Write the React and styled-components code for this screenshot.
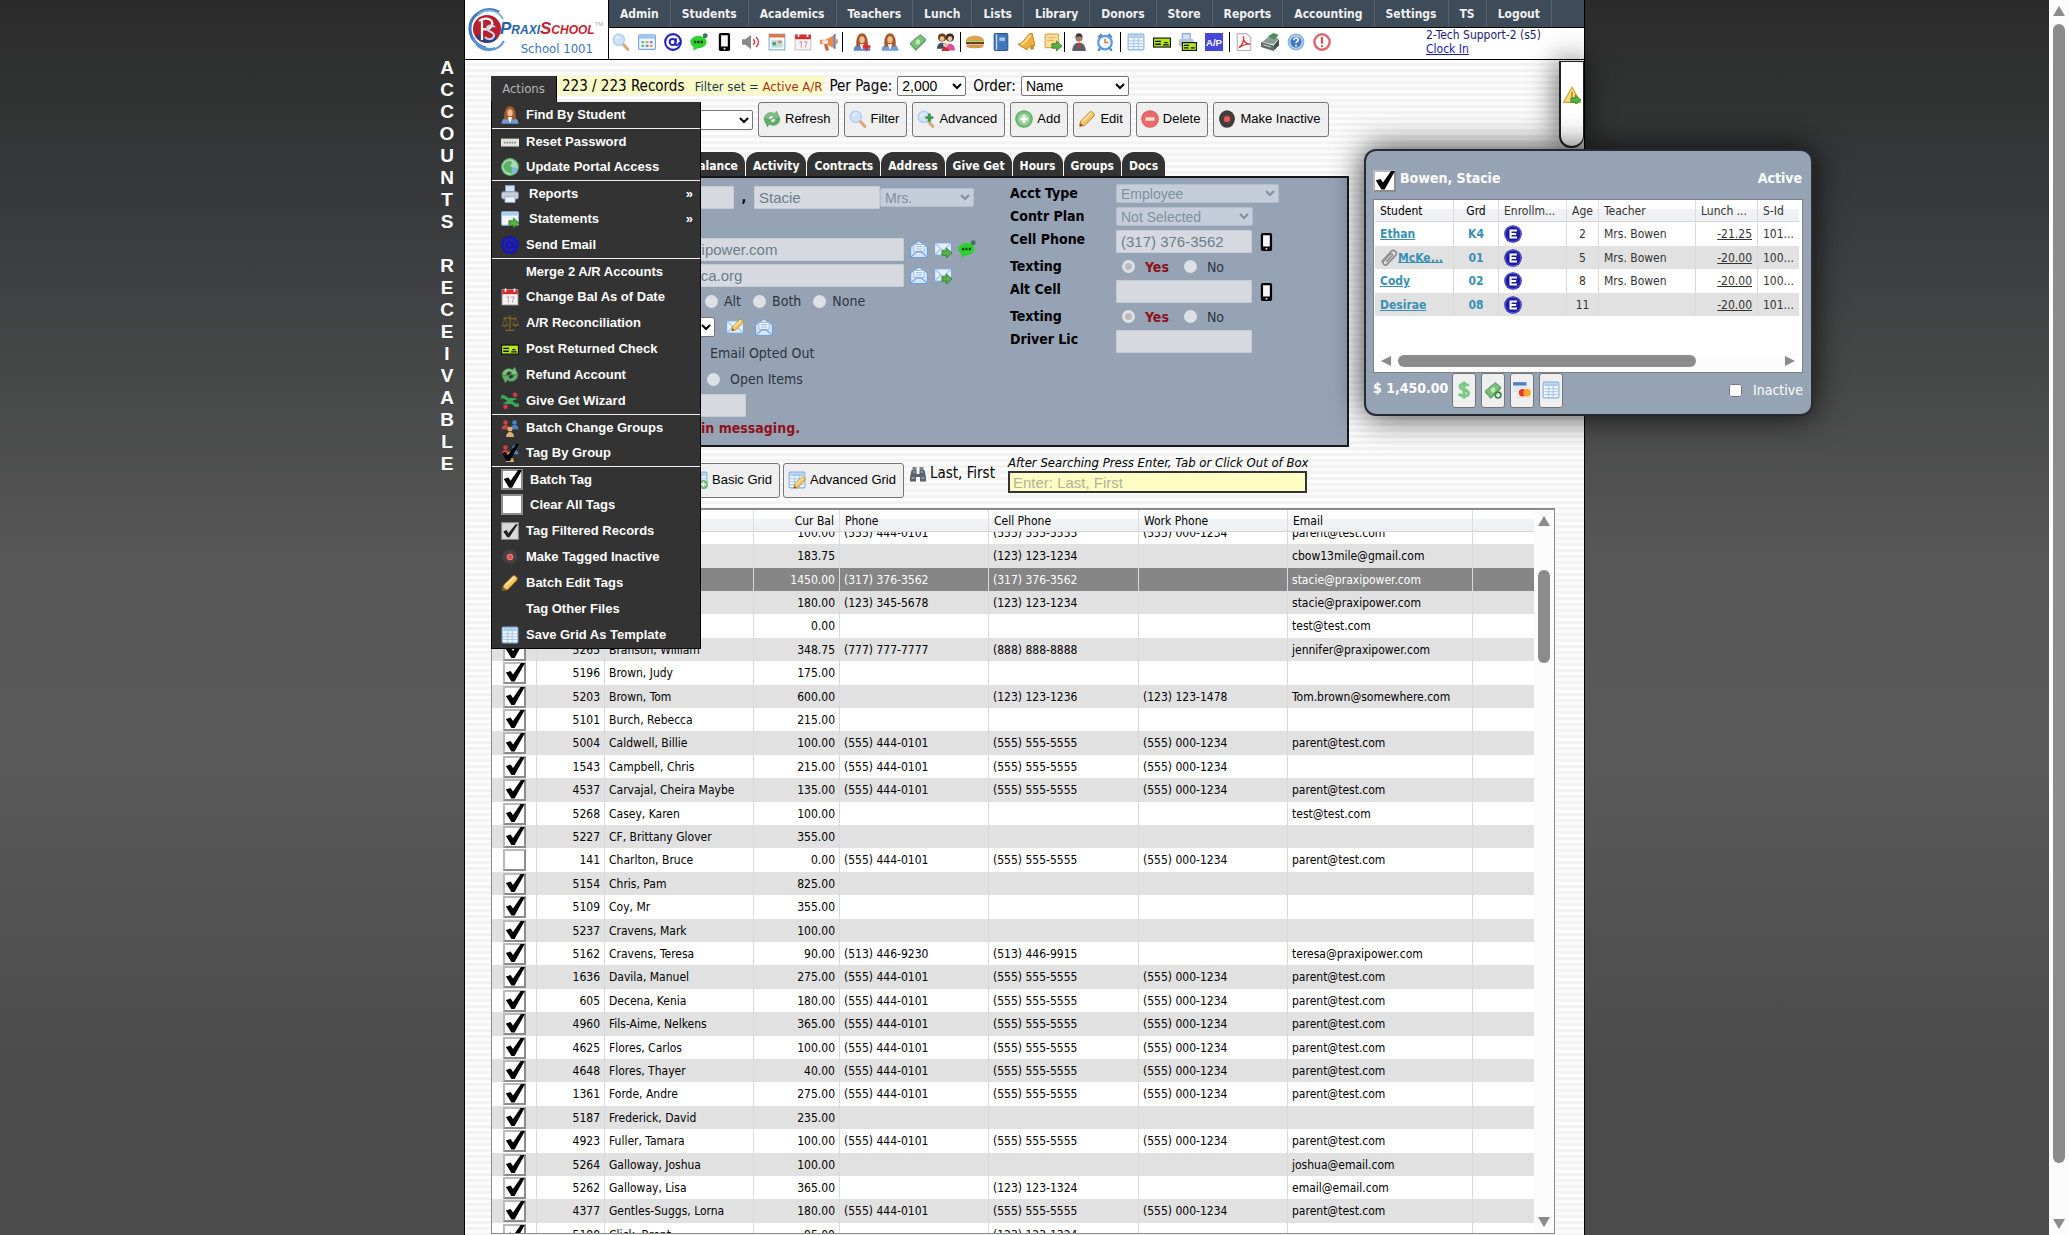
import React, { useLayoutEffect, useRef, useState } from 'react';
import styled, { createGlobalStyle } from 'styled-components';

const ui = "'DejaVu Sans Condensed', 'Noto Sans', sans-serif";
const arial = "'Liberation Sans', Arial, sans-serif";

const GlobalStyle = createGlobalStyle`
  * { box-sizing: border-box; }
  body {
    margin: 0;
    font-family: ${ui};
    font-size: 13px;
    color: #000;
    background: #2b2b2b linear-gradient(#2b2b2b 0, #38393a 200px, #575757 560px, #595959 760px, #4b4b4b 1080px);
  }
  button, input, select { font-family: ${arial}; margin: 0; }
`;

const Layout = styled.div`
  display: grid;
  grid-template-columns: 1fr minmax(0, 1121px) 1fr 20px;
  height: 100vh;
  overflow: hidden;
`;

const SideTitle = styled.h1`
  justify-self: end;
  width: 20px;
  margin: 57px 7px 0 0;
  font: bold 19px/22px ${arial};
  text-align: center;
  color: #fff;
  span { display: block; height: 22px; }
`;

const Page = styled.div`
  position: relative;
  display: flex;
  flex-direction: column;
  min-height: 0;
  border: 1px solid #000;
  border-width: 0 1px;
  background: repeating-linear-gradient(#fcfcfc 0 3px, #f3f3f3 3px 6px);
`;

const Header = styled.header`
  display: flex;
  height: 60px;
  background: #fff;
  border-bottom: 1px solid #000;
`;

const Logo = styled.a`
  display: flex;
  align-items: center;
  width: 144px;
  padding-left: 3px;
  border-right: 1px solid #000;
  text-decoration: none;
`;

const LogoText = styled.div`
  flex: 1;
  min-width: 0;
  padding: 17px 15px 0 0;
  text-align: right;
  font-size: 13px;
  line-height: 19px;
  color: #3a74b8;
`;

const Brand = styled.div`
  display: flex;
  margin: 0 -14px 0 -6px;
  font: italic bold 17px/20px ${arial};
  font-variant: small-caps;
  white-space: nowrap;
  color: #2a62a8;
  em { color: #c4222e; }
  sup { font: 6px/10px ${arial}; color: #a5a5a5; }
`;

const HeaderMain = styled.div`
  flex: 1;
  min-width: 0;
`;

const Nav = styled.nav`
  display: flex;
  height: 28px;
  background: #3e4b59;
  border-bottom: 1px solid #000;
`;

const NavLink = styled.a`
  padding: 0 11px;
  border-right: 1px solid #56626f;
  font-size: 12px;
  font-weight: bold;
  line-height: 28px;
  color: #f0f0f0;
  text-decoration: none;
`;

const IconBar = styled.div`
  display: flex;
  align-items: center;
  height: 31px;
  padding-bottom: 3px;
`;

const IconGroup = styled.div`
  display: flex;
  align-items: center;
  gap: ${p => p.$gap || 8}px;
  height: 20px;
  padding: 0 ${p => p.$right || 5}px 0 ${p => p.$left || 5}px;
  border-right: ${p => (p.$last ? 'none' : '1px solid #000')};
`;

const IconButton = styled.button`
  display: flex;
  padding: 0;
  border: none;
  background: none;
`;

const UserBox = styled.div`
  width: 158px;
  margin-left: auto;
  font-size: 12px;
  line-height: 14px;
  color: #1b1b70;
  a { display: block; color: #2020b0; }
`;

const Content = styled.main`
  flex: 1;
  min-height: 0;
  display: flex;
  flex-direction: column;
  padding: 16px 29px 1px 26px;
`;

const TopRow = styled.div`
  display: flex;
  height: 26px;
  line-height: 20px;
  font-size: 15px;
`;

const ActionsWrap = styled.div`
  position: relative;
  z-index: 5;
  width: 66px;
`;

const ActionsButton = styled.button`
  && { font-family: ${ui}; }
  width: 66px;
  height: 26px;
  padding: 0 0 2px;
  border: 1px solid #000;
  border-width: 0 1px 0 0;
  background: #333;
  color: #b5b5b5;
  font-size: 13px;
`;

const Menu = styled.ul`
  position: absolute;
  top: 26px;
  left: 0;
  width: 210px;
  margin: 0;
  padding: 0;
  list-style: none;
  background: #333;
  border: 1px solid #000;
  border-top: none;
`;

const MenuItem = styled.li`
  border-top: ${p => (p.$line ? '1px solid #eee' : 'none')};
  height: 26px;
  button {
    && { font-family: ${ui}; }
    display: flex;
    align-items: center;
    gap: ${p => (p.$wide ? 10 : 7)}px;
    width: 100%;
    height: 25px;
    padding: 0 7px 0 9px;
    border: none;
    background: none;
    color: #fff;
    font-size: 13px;
    font-weight: bold;
    white-space: nowrap;
  }
  b { margin-left: auto; }
`;

const Blank = styled.span`
  width: 18px;
`;

const Records = styled.div`
  height: 19px;
  padding: 0 3px 0 5px;
  background: #fafac8;
  small { font-size: 13px; color: #24384a; margin-left: 6px; }
  em { font-style: normal; color: #a8320f; }
`;

const Inline = styled.label`
  display: flex;
  gap: 5px;
  margin-left: ${p => p.$left || 4}px;
`;

const Select = styled.select`
  width: ${p => p.$w}px;
  height: 20px;
  padding: 0;
  border: 1px solid #767676;
  border-radius: 2px;
  background: #fff;
  color: #000;
  font-size: 14px;
  &:disabled {
    height: 19px;
    opacity: 1;
    border: 1px solid #b4bfcc;
    background: #c4cdd9;
    color: #7f909f;
  }
`;

const ButtonRow = styled.div`
  display: flex;
  align-items: center;
  gap: 5px;
  height: 35px;
`;

const Button = styled.button`
  display: flex;
  align-items: center;
  gap: 4px;
  height: 35px;
  padding: 0 7px 2px 4px;
  border: 1px solid #767676;
  border-radius: 3px;
  background: #efefef;
  color: #000;
  font-size: 13px;
  white-space: nowrap;
`;

const Tabs = styled.div`
  display: flex;
  gap: 1px;
  height: 24px;
  margin-top: 15px;
  padding-left: 192px;
`;

const Tab = styled.button`
  && { font-family: ${ui}; }
  height: 24px;
  padding: 3px 7px 0;
  border: none;
  border-radius: 12px 12px 0 0;
  background: #333;
  color: #fff;
  font-size: 12px;
  font-weight: bold;
`;

const Panel = styled.form`
  display: flex;
  max-width: 858px;
  height: 271px;
  flex: none;
  padding-top: 6px;
  border: 2px solid #16181c;
  background: #96a3b5;
`;

const LeftForm = styled.div`
  width: 517px;
`;

const Row = styled.div`
  display: flex;
  align-items: center;
  gap: ${p => p.$gap || 0}px;
  height: 26px;
  padding-left: ${p => p.$indent || 120}px;
  font-size: 14px;
  color: #2c3540;
`;

const Warning = styled(Row)`
  height: 20px;
  font-weight: bold;
  color: #8e1219;
`;

const TextBox = styled.input`
  width: ${p => p.$w}px;
  height: 23px;
  padding: 0 4px;
  border: 1px solid #c6ccd5;
  border-radius: 1px;
  background: #d6dae0;
  color: #6b7d8c;
  font-size: 15px;
`;

const Comma = styled.span`
  width: 20px;
  text-align: center;
  font-weight: bold;
  color: #000;
`;

const RadioLabel = styled.label`
  display: flex;
  align-items: center;
  gap: ${p => p.$gap || 6}px;
  font-size: 14px;
  font-weight: ${p => (p.$hot ? 'bold' : 'normal')};
  color: ${p => (p.$hot ? '#8e1219' : '#2c3540')};
`;

const Radio = styled.input.attrs({ type: 'radio' })`
  appearance: none;
  width: 13px;
  height: 13px;
  border: 3px solid #dde0e4;
  border-radius: 50%;
  background: #dde0e4;
  &:checked { background: #bcbcbc; }
`;

const RightForm = styled.div`
  display: grid;
  grid-template-columns: 106px auto;
  row-gap: 4px;
  align-content: start;
  justify-content: start;
`;

const FieldLabel = styled.label`
  font-size: 14px;
  font-weight: bold;
  line-height: 19px;
`;

const Cell = styled.div`
  display: flex;
  align-items: center;
  gap: 6px;
  height: ${p => (p.$short ? 19 : 23)}px;
`;

const RadioCell = styled(Cell)`
  height: 19px;
  padding-left: 6px;
  gap: 15px;
`;

const SearchRow = styled.div`
  display: flex;
  gap: 3px;
  margin: 16px 0 10px 194px;
  height: 35px;
`;

const LastFirst = styled.div`
  display: flex;
  gap: 4px;
  width: 98px;
  padding: 1px 0 0 3px;
  font-size: 15px;
  line-height: 18px;
  svg { margin-top: 2px; }
`;

const Search = styled.label`
  display: block;
  width: 299px;
  margin-top: -8px;
  font-size: 13px;
  line-height: 16px;
  font-style: italic;
  white-space: nowrap;
  input {
    display: block;
    width: 100%;
    height: 22px;
    padding: 0 3px;
    border: 2px solid #333;
    background: #fdfdc4;
    font-size: 15px;
  }
  input::placeholder { color: #b3b39a; }
`;

const GridBox = styled.section`
  flex: 1;
  min-height: 0;
  display: flex;
  border: 2px solid #8a8a8a;
  border-width: 2px 1px 1px;
  background: #fff;
`;

const GridScroll = styled.div`
  flex: 1;
  overflow: auto;
  scrollbar-width: none;
`;

const Table = styled.table`
  width: 100%;
  table-layout: fixed;
  border-collapse: separate;
  border-spacing: 0;
  font-size: 12px;
  th {
    position: sticky;
    top: 0;
    z-index: 1;
    height: 22px;
    padding: 0 5px;
    border-right: 1px solid #dadde0;
    border-bottom: 1px solid #d5d5d5;
    background: linear-gradient(#fff 45%, #f0f2f5 45%, #eef0f3);
    font-weight: normal;
    text-align: left;
  }
  td {
    height: 23px;
    padding: 0 4px;
    border-right: 1px solid #d8dadc;
    line-height: 16px;
    white-space: nowrap;
    overflow: hidden;
  }
  th.num, td.num { text-align: right; }
  th:last-child, td:last-child { border-right: none; }
`;

const DataRow = styled.tr`
  background: ${p => (p.$selected ? '#868686' : '#fff')};
  color: ${p => (p.$selected ? '#fff' : '#000')};
  &:nth-child(even) { background: #e1e1e1; }
  &:nth-child(5n + 2) td, &:nth-child(5n) td { height: 24px; }
`;

const tickShape = 'polygon(4% 50%, 28% 42%, 40% 60%, 80% 0, 100% 0, 48% 98%, 32% 98%)';

const Tick = styled.input.attrs({ type: 'checkbox' })`
  appearance: none;
  display: block;
  flex: none;
  width: 23px;
  height: 22px;
  margin: ${p => (p.$inTable ? '0 0 0 7px' : '0')};
  border: 2px solid #8c8c8c;
  border-top-color: #b9b9b9;
  border-left-color: #b9b9b9;
  background: #fff;
  &:checked::before {
    content: '';
    display: block;
    width: 20px;
    height: 19px;
    margin-top: -1px;
    background: #000;
    clip-path: ${tickShape};
  }
`;

const ScrollCol = styled.div`
  display: flex;
  flex-direction: ${p => (p.$across ? 'row' : 'column')};
  align-items: center;
  gap: ${p => (p.$across ? 6 : 8)}px;
  flex: none;
  width: ${p => (p.$across ? 'auto' : '20px')};
  padding: ${p => (p.$across ? '0 3px 0 5px' : '6px 0')};
  background: #fcfcfc;
`;

const Rail = styled.div`
  flex: 1;
  display: flex;
  flex-direction: ${p => (p.$across ? 'row' : 'column')};
`;

const Gap = styled.div`
  flex: ${p => p.$n} 0 0;
`;

const Thumb = styled.div`
  flex: ${p => p.$n} 0 0;
  min-width: 12px;
  min-height: 12px;
  border-radius: 6px;
  background: #8b8b8b;
`;

const SideTab = styled.button`
  position: absolute;
  top: 61px;
  right: 0;
  width: 25px;
  height: 87px;
  padding: 0 0 16px;
  border: 2px solid #222;
  border-width: 1px 1px 2px 2px;
  border-radius: 0 0 12px 12px;
  background: #fff;
  box-shadow: 0 0 30px rgba(0, 0, 0, 0.7);
`;

const Card = styled.aside`
  position: absolute;
  top: 149px;
  left: 899px;
  z-index: 4;
  width: 449px;
  padding: 0 8px 7px 7px;
  border: 2px solid #262c34;
  border-radius: 12px;
  background: #96a3b5;
  box-shadow: 0 0 32px rgba(0, 0, 0, 0.8);
`;

const CardHead = styled.div`
  display: flex;
  align-items: flex-end;
  gap: 4px;
  height: 48px;
  padding: 0 1px 7px 0;
  color: #fff;
  font-size: 14px;
  font-weight: bold;
  line-height: 28px;
  span:last-child { margin-left: auto; }
`;

const CardGrid = styled.div`
  height: 174px;
  display: flex;
  flex-direction: column;
  justify-content: space-between;
  padding: 0 3px 5px 1px;
  border: 1px solid #7c838c;
  background: #fff;
`;

const CardTable = styled(Table)`
  color: #333;
  td { height: 23px; padding: 0 5px; }
  tr:nth-child(odd) td { height: 24px; }
  tbody tr:nth-child(even) { background: #e1e1e1; }
  th { white-space: nowrap; }
  th:nth-child(-n + 2) { color: #000; }
  th.mid, td.mid { text-align: center; }
  td svg { vertical-align: middle; }
`;

const Student = styled.a`
  font-weight: bold;
  color: #3990b4;
`;

const Grade = styled.b`
  color: #3990b4;
`;

const CardFoot = styled.div`
  display: flex;
  align-items: center;
  gap: 5px;
  height: 34px;
  color: #fff;
  strong { font-size: 14px; line-height: 18px; width: 74px; padding-bottom: 4px; white-space: nowrap; }
  button { width: 24px; padding: 0 2px; justify-content: center; }
  label {
    display: flex;
    align-items: center;
    gap: 11px;
    margin-left: auto;
    font-size: 14px;
  }
  input { width: 13px; height: 13px; }
`;

// every drawing is made on a 16 by 16 board
const person = (hair, top, x = 0) => (
  <g transform={`translate(${x} 0)`}>
    <path d="M.5 15.800c0-4.500 3-5.300 7.500-5.300s7.500.8 7.500 5.300z" fill={top} />
    <path d="M3.200 12c-.8-3.500-.2-11.700 4.800-11.700s5.600 8.200 4.800 11.700z" fill={hair} />
    <ellipse cx="8" cy="6" rx="2.400" ry="3.200" fill="#f0be93" />
    <path d="M6 10h4l-2 5z" fill="#fff" />
  </g>
);
const sheet = (
  <>
    <rect x="1" y="1" width="14" height="14" rx="1" fill="#f2f8ff" stroke="#86aedb" />
    <rect x="2" y="2" width="12" height="2.500" fill="#a9cbee" />
    <path d="M2 7h12M2 9.500h12M2 12h12M6 4v11M10 4v11" stroke="#9dbfe6" strokeWidth=".8" />
  </>
);
const arrow = <path d="M7 9.500h4V7l5 4.500-5 4.500v-2.500H7z" fill="#58b044" stroke="#2f7a22" strokeWidth=".7" />;
const lens = (
  <>
    <path d="M9.500 9.500l4.500 5" stroke="#d8a878" strokeWidth="2.800" strokeLinecap="round" />
    <circle cx="6" cy="6" r="5" fill="#cfe2fa" stroke="#b3cdf0" strokeWidth="1.200" />
    <path d="M3.500 5.500c.5-1.500 1.500-2 3-2" stroke="#fff" fill="none" />
  </>
);
const pencil = (
  <>
    <path d="M1.500 14.500l.7-4.500L10.500 1.800c1.500-1.200 5 1.500 3.700 3.500L6 13.800z" fill="#f6c35c" stroke="#b87b25" strokeWidth=".8" />
    <path d="M4 10l8-7.500" stroke="#fde7a8" strokeWidth="1.600" />
    <path d="M1.500 14.500l.8-2.800 2 2z" fill="#6a4a2a" />
  </>
);
const recycle = (
  <>
    <path d="M1 8c.5-5 5.500-7 9.500-4.500L12 1l3 6.500-7 .3 1.600-1.700C7.500 4 5 5 4.600 8z" fill="#7cc182" stroke="#4b9a58" strokeWidth=".6" />
    <path d="M15 8c-.5 5-5.500 7-9.500 4.500L4 15 1 8.500l7-.3-1.600 1.700C8.500 12 11 11 11.400 8z" fill="#5fae68" stroke="#4b9a58" strokeWidth=".6" />
  </>
);
const check = (
  <>
    <rect x=".5" y="4.500" width="15" height="8" fill="#b5e61d" stroke="#111" />
    <path d="M2 7.500h5M2 10h5M9 10.500h5M10 8.500h3" stroke="#111" strokeWidth="1.200" />
  </>
);
const printer = (
  <>
    <path d="M4 .5h8V7H4z" fill="#cfe3fa" stroke="#8aa8cf" strokeWidth=".7" />
    <rect x=".5" y="6" width="15" height="6.500" rx="1.500" fill="#c8cdd6" stroke="#7c8798" strokeWidth=".8" />
    <path d="M3.500 10.500h9v5h-9z" fill="#eaf3ff" stroke="#8aa8cf" strokeWidth=".7" />
  </>
);
const calendar = (
  <>
    <rect x="1" y="1.500" width="14" height="13.500" fill="#f4f4f4" stroke="#bbb" strokeWidth=".8" />
    <path d="M1 1.500h14v4H1z" fill="#d92b2b" />
    <path d="M4 .5v3M12 .5v3" stroke="#fff" strokeWidth="1.500" />
    <path d="M5 8.500l1.500-1v5.500M8.500 8h3l-1.500 5" stroke="#c89aa5" fill="none" strokeWidth=".9" />
  </>
);
const at = color => (
  <>
    <circle cx="8" cy="8" r="7" fill="none" stroke={color} strokeWidth="1.800" />
    <circle cx="7.700" cy="8" r="2.700" fill="none" stroke={color} strokeWidth="1.700" />
    <path d="M10.800 4.800l-.8 5.200c.5 1.500 3.300 1 4-2" fill="none" stroke={color} strokeWidth="1.600" />
  </>
);
const money = (
  <>
    <path d="M1 9l9-7.500 5 4-9 9z" fill="#7cc07a" stroke="#478f4c" strokeWidth=".8" />
    <ellipse cx="8" cy="8" rx="2" ry="2.400" fill="#bfe5b8" />
    <path d="M1 9v1.500L6 16l9-9V5.500l-9 9z" fill="#5fa763" />
  </>
);
const people = (a, b, c) => (
  <>
    <circle cx="4" cy="3" r="2" fill={a} /><path d="M.5 9c0-5 7-5 7 0z" fill={a} />
    <circle cx="12" cy="3" r="2" fill={b} /><path d="M8.500 9c0-5 7-5 7 0z" fill={b} />
    <circle cx="8" cy="9" r="2.200" fill={c} /><path d="M4.500 16c0-6 7-6 7 0z" fill={c} />
  </>
);
const envelope = <><rect x=".5" y="2.500" width="15" height="11" fill="#e6f1fd" stroke="#79a5d8" /><path d="M1 3l7 6.500L15 3M1 13l5-5M15 13l-5-5" fill="none" stroke="#9dbfe6" /></>;
const phone = <><rect x="2.500" y="0" width="10" height="16" rx="1.500" fill="#000" /><rect x="4.500" y="2" width="6" height="10" fill="#f3f5f8" /><circle cx="7.500" cy="14" r=".9" fill="#ddd" /></>;
const stopDot = <><ellipse cx="8" cy="8" rx="7" ry="7.800" fill="#3d3d3d" /><circle cx="8" cy="8" r="4.500" fill="#5a3a3a" /><rect x="5.500" y="5.500" width="5" height="5" rx="1.500" fill="#ef5a5a" /></>;

const drawings = {
  lens,
  windowGrid: <><rect x=".5" y="1.500" width="15" height="13" rx="1" fill="#eef6ff" stroke="#7fa8dc" /><path d="M1 2h14v3H1z" fill="#9cc3ee" /><path d="M3 7h2.500v2H3zM3 10.500h2.500v2H3z" fill="#6b9" /><path d="M6.800 7h2.500v2H6.800zM10.500 10.500H13v2h-2.500z" fill="#e9a13a" /><path d="M10.500 7H13v2h-2.500zM6.800 10.500h2.500v2H6.800z" fill="#6a8fd8" /></>,
  at: at('#2222c0'),
  atDark: <><circle cx="8" cy="8" r="7.500" fill="#26268c" />{at('#1616c0')}</>,
  chat: <><ellipse cx="7.500" cy="8" rx="7.200" ry="5.500" fill="#2fd131" /><path d="M3 11l0 4.500 5-2.500z" fill="#2fd131" /><circle cx="13.500" cy="2.500" r="2.200" fill="#49705a" /><path d="M3.500 8h8" stroke="#0a3d0a" strokeWidth="2.200" strokeDasharray="2 1" /></>,
  phone,
  speaker: <><path d="M0 5.500h3L8 1.500v13L3 10.500H0z" fill="#8a8a8a" /><path d="M10 5.500c1.500 1.500 1.500 3.500 0 5M12.500 3.500c2.700 2.700 2.700 6.300 0 9" stroke="#e03a44" fill="none" strokeWidth="1.400" /></>,
  planner: <><rect x="1" y="1" width="14" height="14" fill="#f7fbff" stroke="#86aedb" /><path d="M1 1h14v3H1z" fill="#e0744a" /><path d="M3 6h10v7H3z" fill="#bfe0d5" /><path d="M4 8h3v3H4z" fill="#4b9d7b" /><path d="M9 7h3v2H9z" fill="#e07a5f" /></>,
  calendar,
  horn: <><path d="M0 6h5l8-4.500v12L5 10H0z" fill="#e88b4d" /><path d="M3.500 10h3l1.500 5.500H5z" fill="#c06a3c" /><path d="M13 1v13" stroke="#6b89c4" strokeWidth="2" /><path d="M2 6.500h5v3H2z" fill="#f2f2f2" /><path d="M15 5.500v4" stroke="#e88b4d" strokeWidth="1.500" /></>,
  personAdd: <>{person('#a8592b', '#5c86c4')}<path d="M12 8.500v7M8.500 12h7" stroke="#e02b2b" strokeWidth="2.200" /></>,
  person: person('#a8592b', '#6f9bd6'),
  money,
  family: <><circle cx="4.500" cy="4" r="3.600" fill="#6b3b1c" /><circle cx="11.500" cy="4" r="3.600" fill="#33261d" /><path d="M0 14c0-7 9-7 9 0z" fill="#3f4c66" /><path d="M7 15.500c0-8 9-8 9 0z" fill="#e0509a" /><circle cx="4.500" cy="5" r="2.200" fill="#f0be93" /><circle cx="11.500" cy="5" r="2.200" fill="#f0be93" /><circle cx="7.500" cy="10.500" r="2.200" fill="#f0be93" /><path d="M4 16c0-4 7-4 7 0z" fill="#c33" /></>,
  burger: <><path d="M0 7c0-6 16-6 16 0z" fill="#e0a24d" /><path d="M0 8h16v2H0z" fill="#6b3d1d" /><path d="M0 7.200h16" stroke="#8cbf3f" /><path d="M.5 10.500h15v1.500c0 2-15 2-15 0z" fill="#d59745" /></>,
  book: <><rect x="2" y=".5" width="12" height="15" rx="1" fill="#3f78ba" stroke="#2c588f" /><path d="M4 1v14" stroke="#c9dcf2" strokeWidth="1.200" /><path d="M6.500 4h5v3h-5z" fill="#a8c8ea" /></>,
  bell: <><path d="M0 10C6 9 7 1 12.500 0l2.500 11c-3 0-6 1-7 4z" fill="#f0b13c" stroke="#b87b25" strokeWidth=".8" /><path d="M3 10c4-1 5-5 8-8" stroke="#fbe09a" strokeWidth="1.500" fill="none" /><circle cx="12.500" cy="13" r="1.800" fill="#c98a2a" /></>,
  noteGo: <><rect x="1" y="1" width="12" height="12" rx="1" fill="#fbdf92" stroke="#d8a64c" /><path d="M3 4h8M3 6.500h6" stroke="#e3b766" />{arrow}</>,
  man: <><path d="M2 16c0-10 12-10 12 0z" fill="#5c5f66" /><circle cx="8" cy="4.500" r="3.200" fill="#a07a62" /><path d="M4.800 4c0-5 6.400-5 6.400 0-2-1.500-4.400-1.500-6.400 0z" fill="#333" /><path d="M6.500 9h3L8 15z" fill="#d33" /></>,
  clock: <><path d="M2 4l3-3M14 4l-3-3M4 13l-2 3M12 13l2 3" stroke="#5a86c4" strokeWidth="2" /><circle cx="8" cy="8.500" r="6" fill="#f3f8ff" stroke="#5a9be0" strokeWidth="2" /><path d="M8 5v3.500h3" stroke="#d9822b" fill="none" strokeWidth="1.400" /></>,
  sheet,
  check,
  printCheck: <><path d="M3 .5h7V7H3z" fill="#cfe3fa" stroke="#8aa8cf" /><rect x="0" y="5" width="13" height="7" rx="1.500" fill="#b8c4d6" /><rect x="3" y="8.500" width="12.500" height="7" fill="#b5e61d" stroke="#111" /><path d="M4.500 11h4.500M4.500 13.200h4M10.500 13.200H14" stroke="#111" /></>,
  ap: <><rect width="16" height="16" fill="#4646d8" /><text x="8" y="11.500" fontSize="8.500" fontWeight="bold" fontFamily={arial} textAnchor="middle" fill="#fff">A/P</text></>,
  pdf: <><path d="M2 .5h8.500L14 4v11.500H2z" fill="#fafafa" stroke="#b5b5b5" /><path d="M3.500 13c3-2 5-7 4-10-.5 4 2 7 6 7-3-.5-7 1-10 3z" fill="none" stroke="#dc3b3b" strokeWidth="1.300" /></>,
  register: <><path d="M1 8l6-5 9 2-5 5z" fill="#8b9a94" /><path d="M6 3l5-3 4.500 1.500-3 4.500z" fill="#4b8f62" /><path d="M0 8l11 3v5L0 12.500z" fill="#5d6a66" /><path d="M11 11l5-5.500v5.500l-5 5z" fill="#454f4c" /><path d="M2 10.500l7 2" stroke="#c9d2ce" /></>,
  help: <><circle cx="8" cy="8" r="7.500" fill="#8fb4e0" /><circle cx="8" cy="8" r="5.500" fill="#3f78c0" stroke="#c5dbf3" /><path d="M6 6.500c0-3 4.500-2.500 4 0-.3 1-2 1-2 2.500M8 10.500v1.500" stroke="#fff" fill="none" strokeWidth="1.400" /></>,
  stop: <><circle cx="8" cy="8" r="6.800" fill="#fff" stroke="#d66a70" strokeWidth="2.200" /><path d="M8 3.500v6M8 10.800v1.700" stroke="#d0555c" strokeWidth="2" /></>,
  recycle,
  lensAdd: <>{lens}<path d="M11 3v7.500M7.500 6.800h7" stroke="#3f9a48" strokeWidth="2.600" /></>,
  add: <><circle cx="8" cy="8" r="7.300" fill="#7cc07e" stroke="#5ea863" /><circle cx="8" cy="8" r="5" fill="#9fd69f" /><path d="M8 4.500v7M4.500 8h7" stroke="#fff" strokeWidth="2.200" /></>,
  pencil,
  remove: <><circle cx="8" cy="8" r="7.300" fill="#ea6a6a" stroke="#dc5a5a" /><path d="M4 8h8" stroke="#fbe3d2" strokeWidth="3" /></>,
  stopDot,
  stopDim: <><circle cx="8" cy="8" r="6.500" fill="#484040" /><circle cx="8" cy="8" r="2.600" fill="#e85050" stroke="#f5a0a0" strokeWidth=".6" /></>,
  password: <><rect x="0" y="5" width="16" height="7" fill="#e4e4e0" /><path d="M2.500 8.500h11" stroke="#888" strokeWidth="1.500" strokeDasharray="1.500 .8" /></>,
  globe: <><circle cx="8" cy="8" r="7.500" fill="#a8d8b4" stroke="#5aa86a" /><path d="M2 7c3-5 6-5 8-3l-2 3 3 2-1 5c-4-2-7-1-8-7z" fill="#5cb068" /><circle cx="12" cy="11" r="2.500" fill="#7fb6e6" /></>,
  printer,
  windowGo: <><rect x=".5" y="1.500" width="15" height="12" rx="1" fill="#f3f8ff" stroke="#8fb2de" /><path d="M1 2h14v3H1z" fill="#a9cbee" />{arrow}</>,
  scales: <><path d="M8 1v12M4 14.500h8M2 4c3-1.500 9 1.500 12-.5" stroke="#7a6228" strokeWidth="1.300" fill="none" /><path d="M3.500 4L1 10h5zM13 3.500L10.500 9.500h5z" fill="none" stroke="#7a6228" strokeWidth=".7" /><path d="M.5 10h6c-1 2-5 2-6 0zM10 9.500h6c-1 2-5 2-6 0z" fill="#7a6228" /></>,
  giveGet: <><path d="M0 3c5-2 5 4 9 2l6 1-5 2C4 10 5 5 0 6z" fill="#3aa655" /><path d="M16 13c-5 2-5-4-9-2l-6-1 5-2c6-1 5 3 10 2z" fill="#3aa655" /><circle cx="12.500" cy="2.500" r="2" fill="#e0354a" /><circle cx="4" cy="13" r="2" fill="#e0354a" /></>,
  groups: people('#c94545', '#4a86cc', '#d8b070'),
  groupsTag: <>{people('#c94545', '#4a86cc', '#d8b070')}<path d="M1 8l3-1 2 3 7.500-10H16L8 15H5z" fill="#000" /></>,
  tagFiltered: <><rect x=".5" y=".5" width="15" height="15" fill="#d9d9d9" stroke="#888" /><path d="M2 8.500l3-1.500 1.500 3L13 2h2L7.500 13.500H5.500z" fill="#222" /></>,
  mailOpen: <><path d="M.5 6L8 .8 15.500 6v9.500H.5z" fill="#d5e6fa" stroke="#6f9fd8" /><rect x="3.500" y="4" width="9" height="6" fill="#fff" stroke="#9dbfe6" /><path d="M5 6h6M5 8h6" stroke="#86aedb" /><path d="M1 15l5-4.500h4L15 15" fill="none" stroke="#6f9fd8" /></>,
  mailGo: <>{envelope}{arrow}</>,
  mailEdit: <>{envelope}<g transform="translate(4 0) scale(.78)">{pencil}</g></>,
  gridAdd: <>{sheet}<circle cx="12" cy="12" r="4" fill="#6cb96f" /><path d="M12 9.800v4.400M9.800 12h4.400" stroke="#fff" strokeWidth="1.400" /></>,
  gridEdit: <>{sheet}<g transform="translate(4 4) scale(.78)">{pencil}</g></>,
  binoculars: <><path d="M1.500 4h5v4h3V4h5l1.500 7v4.500h-6V11H6v4.500H0V11z" fill="#5a636d" /><path d="M2.500 1h4v3h-4zM9.500 1h4v3h-4z" fill="#7a828c" /><path d="M1.500 12h3M11.500 12h3M3 6h2M11 6h2" stroke="#a5afba" strokeWidth="1.400" /></>,
  warnGo: <><path d="M8 1l7.500 13.500H.5z" fill="#fbdc7a" stroke="#d8a13a" /><path d="M8 5v5" stroke="#c98a2a" strokeWidth="1.500" /><g transform="translate(0 1)">{arrow}</g></>,
  enrolled: <><circle cx="8" cy="8" r="7.800" fill="#1c1ca8" /><circle cx="8" cy="8" r="7" fill="none" stroke="#7d7de0" strokeWidth=".6" /><path d="M11.500 4.800H5.800v6.400h5.700M5.800 8h5" stroke="#fff" fill="none" strokeWidth="1.800" /></>,
  clip: <path d="M1.500 11.500L10 2c2-2 6 .5 4 3.500L6.500 13.500c-2 2-5-.5-3.300-2.800L9 4.500c1-1 2.500.3 1.700 1.500L5.500 11.500" fill="none" stroke="#8e8e8e" strokeWidth="1.500" />,
  dollar: <path d="M12 4.500C11 2.500 4.500 2 4.500 5.200s7.500 2 7.500 5.500-7 3.500-8.300.6M8 .5v15" fill="none" stroke="#7cc783" strokeWidth="2.600" />,
  moneyAdd: <>{money}<circle cx="12.500" cy="12.500" r="2.500" fill="#fff" stroke="#3b8a48" strokeWidth="1.600" /></>,
  cards: <><path d="M0 1h12v9H0z" fill="#dfe9f6" /><path d="M0 1h12v3H0z" fill="#4f7fc4" /><rect x="4" y="6" width="12" height="9" fill="#f6ead8" stroke="#ddd" strokeWidth=".5" /><circle cx="8.500" cy="10.500" r="3.300" fill="#e5342f" /><circle cx="12.500" cy="10.500" r="3.300" fill="#f5a62c" /></>,
};

const Icon = ({ name, size = 18 }) => (
  <svg width={size} height={size} viewBox="0 0 16 16" aria-hidden="true">{drawings[name]}</svg>
);

const triangles = {
  up: 'M6 0l6 10H0z',
  down: 'M6 10L0 0h12z',
  left: 'M1 5l10-5v10z',
  right: 'M11 5L1 0v10z',
};

const Arrow = ({ to }) => (
  <IconButton type="button" aria-label={`Scroll ${to}`}>
    <svg width="12" height="10" viewBox="0 0 12 10"><path d={triangles[to]} fill="#8b8b8b" /></svg>
  </IconButton>
);

const ScrollBar = ({ across, before, size, after }) => (
  <ScrollCol $across={across}>
    <Arrow to={across ? 'left' : 'up'} />
    <Rail $across={across}>
      <Gap $n={before} />
      <Thumb $n={size} />
      <Gap $n={after} />
    </Rail>
    <Arrow to={across ? 'right' : 'down'} />
  </ScrollCol>
);

const navItems = ['Admin', 'Students', 'Academics', 'Teachers', 'Lunch', 'Lists', 'Library', 'Donors',
  'Store', 'Reports', 'Accounting', 'Settings', 'TS', 'Logout'];

const iconGroups = [
  { left: 3, right: 4, icons: ['lens', 'windowGrid', 'at', 'chat', 'phone', 'speaker', 'planner', 'calendar', 'horn'] },
  { left: 10, gap: 10, icons: ['personAdd', 'person', 'money', 'family'] },
  { right: 2, icons: ['burger', 'book', 'bell', 'noteGo'] },
  { right: 6, icons: ['man', 'clock'] },
  { left: 6, right: 6, icons: ['sheet', 'check', 'printCheck', 'ap'] },
  { last: true, icons: ['pdf', 'register', 'help', 'stop'] },
];

const menuItems = [
  { text: 'Find By Student', icon: 'person' },
  { text: 'Reset Password', icon: 'password', line: true },
  { text: 'Update Portal Access', icon: 'globe' },
  { text: 'Reports', icon: 'printer', line: true, wide: true, more: true },
  { text: 'Statements', icon: 'windowGo', wide: true, more: true },
  { text: 'Send Email', icon: 'atDark' },
  { text: 'Merge 2 A/R Accounts', line: true },
  { text: 'Change Bal As of Date', icon: 'calendar' },
  { text: 'A/R Reconciliation', icon: 'scales' },
  { text: 'Post Returned Check', icon: 'check' },
  { text: 'Refund Account', icon: 'recycle' },
  { text: 'Give Get Wizard', icon: 'giveGet' },
  { text: 'Batch Change Groups', icon: 'groups', line: true },
  { text: 'Tag By Group', icon: 'groupsTag' },
  { text: 'Batch Tag', box: 'on', line: true },
  { text: 'Clear All Tags', box: 'off' },
  { text: 'Tag Filtered Records', icon: 'tagFiltered' },
  { text: 'Make Tagged Inactive', icon: 'stopDim' },
  { text: 'Batch Edit Tags', icon: 'pencil' },
  { text: 'Tag Other Files' },
  { text: 'Save Grid As Template', icon: 'sheet' },
];

const BoxMark = styled.span`
  width: 22px;
  height: 21px;
  border: 2px solid #8c8c8c;
  background: #fff;
  &::before {
    content: '';
    display: ${p => (p.$on ? 'block' : 'none')};
    width: 19px;
    height: 18px;
    margin-top: -1px;
    background: #000;
    clip-path: ${tickShape};
  }
`;

const H = '(555) 444-0101';
const C = '(555) 555-5555';
const W = '(555) 000-1234';
const P = 'parent@test.com';

const accounts = [
  ['5006', 'Bowen, Amy', '100.00', H, C, W, P],
  ['5190', 'Bowen, Chris', '183.75', '', '(123) 123-1234', '', 'cbow13mile@gmail.com'],
  ['1001', 'Bowen, Stacie', '1450.00', '(317) 376-3562', '(317) 376-3562', '', 'stacie@praxipower.com'],
  ['5201', 'Bowen, Stacie M.', '180.00', '(123) 345-5678', '(123) 123-1234', '', 'stacie@praxipower.com'],
  ['5259', 'Brand, Joe', '0.00', '', '', '', 'test@test.com'],
  ['5265', 'Branson, William', '348.75', '(777) 777-7777', '(888) 888-8888', '', 'jennifer@praxipower.com'],
  ['5196', 'Brown, Judy', '175.00', '', '', '', ''],
  ['5203', 'Brown, Tom', '600.00', '', '(123) 123-1236', '(123) 123-1478', 'Tom.brown@somewhere.com'],
  ['5101', 'Burch, Rebecca', '215.00', '', '', '', ''],
  ['5004', 'Caldwell, Billie', '100.00', H, C, W, P],
  ['1543', 'Campbell, Chris', '215.00', H, C, W, ''],
  ['4537', 'Carvajal, Cheira Maybe', '135.00', H, C, W, P],
  ['5268', 'Casey, Karen', '100.00', '', '', '', 'test@test.com'],
  ['5227', 'CF, Brittany Glover', '355.00', '', '', '', ''],
  ['141', 'Charlton, Bruce', '0.00', H, C, W, P],
  ['5154', 'Chris, Pam', '825.00', '', '', '', ''],
  ['5109', 'Coy, Mr', '355.00', '', '', '', ''],
  ['5237', 'Cravens, Mark', '100.00', '', '', '', ''],
  ['5162', 'Cravens, Teresa', '90.00', '(513) 446-9230', '(513) 446-9915', '', 'teresa@praxipower.com'],
  ['1636', 'Davila, Manuel', '275.00', H, C, W, P],
  ['605', 'Decena, Kenia', '180.00', H, C, W, P],
  ['4960', 'Fils-Aime, Nelkens', '365.00', H, C, W, P],
  ['4625', 'Flores, Carlos', '100.00', H, C, W, P],
  ['4648', 'Flores, Thayer', '40.00', H, C, W, P],
  ['1361', 'Forde, Andre', '275.00', H, C, W, P],
  ['5187', 'Frederick, David', '235.00', '', '', '', ''],
  ['4923', 'Fuller, Tamara', '100.00', H, C, W, P],
  ['5264', 'Galloway, Joshua', '100.00', '', '', '', 'joshua@email.com'],
  ['5262', 'Galloway, Lisa', '365.00', '', '(123) 123-1324', '', 'email@email.com'],
  ['4377', 'Gentles-Suggs, Lorna', '180.00', H, C, W, P],
  ['5188', 'Click, Brent', '95.00', '', '(123) 123-1324', '', ''],
];

const students = [
  ['Ethan', 'K4', '2', 'Mrs. Bowen', '-21.25', '101...'],
  ['McKe...', '01', '5', 'Mrs. Bowen', '-20.00', '100...'],
  ['Cody', '02', '8', 'Mrs. Bowen', '-20.00', '100...'],
  ['Desirae', '08', '11', '', '-20.00', '101...'],
];

const ActionsMenu = () => {
  const [open, setOpen] = useState(true);
  return (
    <ActionsWrap>
      <ActionsButton type="button" onClick={() => setOpen(!open)}>Actions</ActionsButton>
      {open && (
        <Menu>
          {menuItems.map(item => (
            <MenuItem key={item.text} $line={item.line} $wide={item.wide}>
              <button type="button">
                {item.icon && <Icon name={item.icon} />}
                {item.box && <BoxMark $on={item.box === 'on'} />}
                {!item.icon && !item.box && <Blank />}
                {item.text}
                {item.more && <b>»</b>}
              </button>
            </MenuItem>
          ))}
        </Menu>
      )}
    </ActionsWrap>
  );
};

const YesNo = ({ name }) => (
  <RadioCell>
    <RadioLabel $hot $gap={10}><Radio name={name} defaultChecked disabled />Yes</RadioLabel>
    <RadioLabel $gap={10}><Radio name={name} disabled />No</RadioLabel>
  </RadioCell>
);

const AccountForm = () => (
  <Panel>
    <LeftForm>
      <Row>
        <TextBox $w={121} aria-label="Last name" defaultValue="Bowen" disabled />
        <Comma>,</Comma>
        <TextBox $w={126} aria-label="First name" defaultValue="Stacie" disabled />
        <Select $w={94} aria-label="Title" disabled><option>Mrs.</option></Select>
      </Row>
      <Row />
      <Row $gap={6}>
        <TextBox $w={291} aria-label="Email" defaultValue="stacie@praxipower.com" disabled />
        <Icon name="mailOpen" /><Icon name="mailGo" /><Icon name="chat" />
      </Row>
      <Row $gap={6}>
        <TextBox $w={291} aria-label="Alternate email" defaultValue="stacieb@ymca.org" disabled />
        <Icon name="mailOpen" /><Icon name="mailGo" />
      </Row>
      <Row $indent={212} $gap={12}>
        <RadioLabel><Radio name="send" disabled />Alt</RadioLabel>
        <RadioLabel><Radio name="send" disabled />Both</RadioLabel>
        <RadioLabel><Radio name="send" disabled />None</RadioLabel>
      </Row>
      <Row $gap={11}>
        <Select $w={102} aria-label="Email template"><option /></Select>
        <Icon name="mailEdit" /><Icon name="mailOpen" />
      </Row>
      <Row $indent={217}>Email Opted Out</Row>
      <Row $indent={214}>
        <RadioLabel $gap={10}><Radio name="items" disabled />Open Items</RadioLabel>
      </Row>
      <Row><TextBox $w={133} aria-label="Code" disabled /></Row>
      <Warning $indent={208}>in messaging.</Warning>
    </LeftForm>
    <RightForm>
      <FieldLabel htmlFor="acct">Acct Type</FieldLabel>
      <Cell $short><Select id="acct" $w={163} disabled><option>Employee</option></Select></Cell>
      <FieldLabel htmlFor="plan">Contr Plan</FieldLabel>
      <Cell $short><Select id="plan" $w={137} disabled><option>Not Selected</option></Select></Cell>
      <FieldLabel htmlFor="cell">Cell Phone</FieldLabel>
      <Cell><TextBox id="cell" $w={136} defaultValue="(317) 376-3562" disabled /><Icon name="phone" /></Cell>
      <FieldLabel as="span">Texting</FieldLabel>
      <YesNo name="text1" />
      <FieldLabel htmlFor="alt">Alt Cell</FieldLabel>
      <Cell><TextBox id="alt" $w={136} disabled /><Icon name="phone" /></Cell>
      <FieldLabel as="span">Texting</FieldLabel>
      <YesNo name="text2" />
      <FieldLabel htmlFor="lic">Driver Lic</FieldLabel>
      <Cell><TextBox id="lic" $w={136} disabled /></Cell>
    </RightForm>
  </Panel>
);

const AccountGrid = () => {
  const scroller = useRef(null);

  useLayoutEffect(() => {
    scroller.current.scrollTop = 11;
  }, []);

  return (
    <GridBox>
      <GridScroll ref={scroller}>
        <Table>
          <colgroup>
            {[45, 68, 149, 86, 149, 150, 149, 185].map((w, i) => <col key={i} width={w} />)}
            <col />
          </colgroup>
          <thead>
            <tr>
              <th /><th /><th />
              <th className="num">Cur Bal</th>
              <th>Phone</th><th>Cell Phone</th><th>Work Phone</th><th>Email</th><th />
            </tr>
          </thead>
          <tbody>
            {accounts.map(([id, name, bal, home, cell, work, email]) => (
              <DataRow key={id} $selected={id === '1001'}>
                <td><Tick $inTable aria-label={`Tag ${name}`} defaultChecked={id !== '141'} /></td>
                <td className="num">{id}</td>
                <td>{name}</td>
                <td className="num">{bal}</td>
                <td>{home}</td>
                <td>{cell}</td>
                <td>{work}</td>
                <td>{email}</td>
                <td />
              </DataRow>
            ))}
          </tbody>
        </Table>
      </GridScroll>
      <ScrollBar before={36} size={93} after={546} />
    </GridBox>
  );
};

const FamilyCard = () => (
  <Card>
    <CardHead>
      <Tick aria-label="Tag Bowen, Stacie" defaultChecked />
      <span>Bowen, Stacie</span>
      <span>Active</span>
    </CardHead>
    <CardGrid>
      <CardTable>
        <colgroup>
          {[79, 45, 68, 32, 97, 62].map((w, i) => <col key={i} width={w} />)}
          <col />
        </colgroup>
        <thead>
          <tr>
            <th>Student</th><th className="mid">Grd</th><th>Enrollm...</th><th className="mid">Age</th>
            <th>Teacher</th><th>Lunch ...</th><th>S-Id</th>
          </tr>
        </thead>
        <tbody>
          {students.map(([name, grade, age, teacher, lunch, id], i) => (
            <tr key={name}>
              <td>{i === 1 && <Icon name="clip" />}<Student href="#">{name}</Student></td>
              <td className="mid"><Grade>{grade}</Grade></td>
              <td><Icon name="enrolled" /></td>
              <td className="mid">{age}</td>
              <td>{teacher}</td>
              <td className="num"><u>{lunch}</u></td>
              <td>{id}</td>
            </tr>
          ))}
        </tbody>
      </CardTable>
      <ScrollBar across before={0} size={300} after={83} />
    </CardGrid>
    <CardFoot>
      <strong>$ 1,450.00</strong>
      {['dollar', 'moneyAdd', 'cards', 'sheet'].map(name => (
        <Button key={name} type="button" aria-label={name}><Icon name={name} /></Button>
      ))}
      <label><input type="checkbox" />Inactive</label>
    </CardFoot>
  </Card>
);

const App = () => (
  <>
    <GlobalStyle />
    <Layout>
      <SideTitle aria-label="Accounts Receivable">
        {'ACCOUNTS RECEIVABLE'.split('').map((ch, i) => <span key={i}>{ch}</span>)}
      </SideTitle>
      <Page>
        <Header>
          <Logo href="#">
            <svg width="38" height="46" viewBox="0 0 38 46" aria-hidden="true">
              <path d="M31 5C17-2 1 8 2 23c1 9 7 16 16 18" fill="none" stroke="#3a7abf" strokeWidth="3" />
              <path d="M8 37c8 9 22 8 28-3M5 30c3 9 12 14 22 11" fill="none" stroke="#5b96d2" strokeWidth="2" />
              <path d="M10 8C17 1 30 2 35 12" fill="none" stroke="#7fb0de" strokeWidth="2" />
              <circle cx="19" cy="22" r="14" fill="#b8202c" />
              <path d="M10 28c2 6 12 8 18 2" fill="none" stroke="#2b3f86" strokeWidth="4" />
              <path d="M14 33V12M11 14c5-4 15-3 13 4-1 4-6 5-10 4" fill="none" stroke="#fff" strokeWidth="2.200" />
              <path d="M27 20c-4-3-9-1-8 2s8 3 7 7-7 4-9 1" fill="none" stroke="#cfd9ee" strokeWidth="2" />
            </svg>
            <LogoText>
              <Brand>Praxi<em>School</em><sup>TM</sup></Brand>
              School 1001
            </LogoText>
          </Logo>
          <HeaderMain>
            <Nav>{navItems.map(n => <NavLink key={n} href="#">{n}</NavLink>)}</Nav>
            <IconBar>
              {iconGroups.map(g => (
                <IconGroup key={g.icons[0]} $left={g.left} $right={g.right} $gap={g.gap} $last={g.last}>
                  {g.icons.map(n => <IconButton key={n} type="button" aria-label={n}><Icon name={n} /></IconButton>)}
                </IconGroup>
              ))}
              <UserBox>2-Tech Support-2 (s5)<a href="#">Clock In</a></UserBox>
            </IconBar>
          </HeaderMain>
        </Header>

        <Content>
          <TopRow>
            <ActionsMenu />
            <Records>223 / 223 Records <small>Filter set = <em>Active A/R</em></small></Records>
            <Inline>Per Page:<Select $w={69}><option>2,000</option></Select></Inline>
            <Inline $left={7}>Order:<Select $w={108}><option>Name</option></Select></Inline>
          </TopRow>
          <ButtonRow>
            <Select $w={262} aria-label="Saved filter"><option /></Select>
            <Button><Icon name="recycle" />Refresh</Button>
            <Button><Icon name="lens" />Filter</Button>
            <Button><Icon name="lensAdd" />Advanced</Button>
            <Button><Icon name="add" />Add</Button>
            <Button><Icon name="pencil" />Edit</Button>
            <Button><Icon name="remove" />Delete</Button>
            <Button><Icon name="stopDot" />Make Inactive</Button>
          </ButtonRow>
          <Tabs>
            {['Balance', 'Activity', 'Contracts', 'Address', 'Give Get', 'Hours', 'Groups', 'Docs'].map(t => (
              <Tab key={t} type="button">{t}</Tab>
            ))}
          </Tabs>
          <AccountForm />
          <SearchRow>
            <Button><Icon name="gridAdd" />Basic Grid</Button>
            <Button><Icon name="gridEdit" />Advanced Grid</Button>
            <LastFirst><Icon name="binoculars" size={16} />Last, First</LastFirst>
            <Search>
              After Searching Press Enter, Tab or Click Out of Box
              <input placeholder="Enter: Last, First" />
            </Search>
          </SearchRow>
          <AccountGrid />
        </Content>

        <SideTab type="button" aria-label="Alerts"><Icon name="warnGo" /></SideTab>
        <FamilyCard />
      </Page>
      <div />
      <ScrollBar before={0} size={1142} after={48} />
    </Layout>
  </>
);

export default App;
